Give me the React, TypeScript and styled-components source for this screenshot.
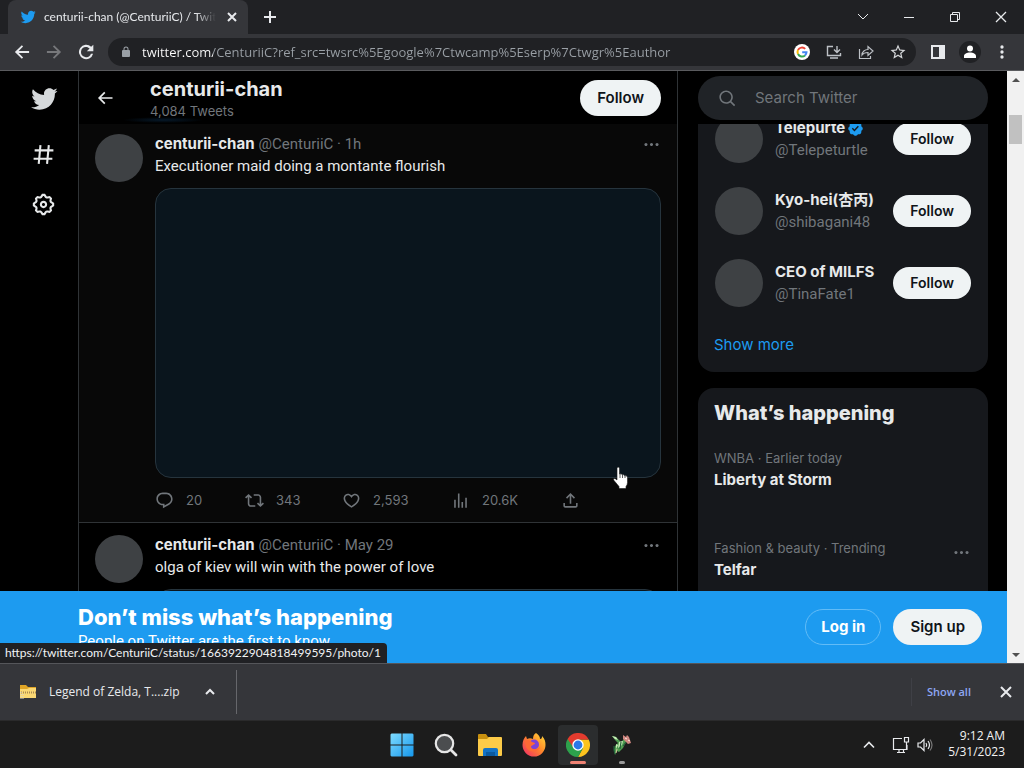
import React from "react";
import styled, { createGlobalStyle } from "styled-components";

const GlobalStyle = createGlobalStyle`
  *, *::before, *::after { box-sizing: border-box; }
  body { margin: 0; background: #000; }
  button, input { font: inherit; color: inherit; }
  button { border: 0; padding: 0; background: none; cursor: pointer; }
  svg { display: block; flex: none; }
  h1, h2, p { margin: 0; }
`;

const systemFont = `"Open Sans", "Noto Sans", sans-serif`;
const compactFont = `Lato, "Open Sans", sans-serif`;
const siteFont = `Inter, Roboto, "Noto Sans CJK JP", sans-serif`;
const copyFont = `Roboto, Inter, sans-serif`;

/* ---------- Browser window ---------- */

const Desktop = styled.div`
  display: flex;
  flex-direction: column;
  height: 100vh;
  overflow: hidden;
  font-family: ${systemFont};
  font-size: 12px;
  line-height: 16px;
  color: #e8eaed;
`;

const TabStrip = styled.header`
  display: flex;
  align-items: center;
  flex: none;
  height: 34px;
  padding-left: 8px;
  background: #202124;
`;

const Tab = styled.div`
  display: flex;
  align-items: center;
  gap: 8px;
  width: 240px;
  height: 34px;
  padding: 0 8px 0 12px;
  border-radius: 8px 8px 0 0;
  background: #35363a;
`;

const TabTitle = styled.span`
  flex: 1;
  min-width: 0;
  overflow: hidden;
  white-space: nowrap;
  font-family: ${compactFont};
  mask-image: linear-gradient(to right, #000 88%, transparent);
`;

const IconButton = styled.button<{ $width?: number; $color?: string }>`
  display: flex;
  align-items: center;
  justify-content: center;
  flex: none;
  width: ${(p) => p.$width ?? 32}px;
  height: 28px;
  color: ${(p) => p.$color ?? "#e8eaed"};
`;

const WindowControls = styled.div`
  display: flex;
  margin-left: auto;
`;

const Toolbar = styled.nav`
  display: flex;
  align-items: center;
  flex: none;
  height: 37px;
  padding: 0 6px;
  border-bottom: 1px solid #5a5b5e;
  background: #35363a;
`;

const Omnibox = styled.label`
  display: flex;
  align-items: center;
  flex: 1;
  min-width: 0;
  height: 28px;
  margin: 0 6px;
  padding: 0 2px 0 12px;
  border-radius: 14px;
  background: #202124;
`;

const UrlInput = styled.input`
  flex: 1;
  min-width: 0;
  height: 24px;
  margin-left: 10px;
  padding: 0;
  border: 0;
  outline: 0;
  font-size: 13px;
  background: linear-gradient(to right, #fff 71px, #9aa0a6 71px);
  background-clip: text;
  -webkit-text-fill-color: transparent;
`;

const Viewport = styled.div`
  position: relative;
  display: flex;
  flex: 1;
  min-height: 0;
  background: #000;
`;

const StatusBubble = styled.div`
  position: absolute;
  left: 0;
  bottom: 0;
  height: 20px;
  padding: 1px 6px 0 5px;
  border-radius: 0 4px 0 0;
  background: #202124;
  color: #f1f3f4;
  font-family: ${compactFont};
  line-height: 18px;
  white-space: nowrap;
`;

const ScrollTrack = styled.div`
  display: flex;
  flex-direction: column;
  align-items: center;
  flex: none;
  width: 17px;
  background: #f1f1f1;
`;

const ScrollArrow = styled.button`
  display: grid;
  place-items: center;
  width: 17px;
  height: 17px;
  color: #505050;
`;

const ScrollThumb = styled.div`
  width: 13px;
  height: 29px;
  margin: 27px 0 auto;
  background: #c1c1c1;
`;

/* ---------- Twitter page ---------- */

const Page = styled.div`
  position: relative;
  display: grid;
  grid-template-columns: 78px minmax(0, 1fr) 290px;
  flex: 1;
  min-width: 0;
  padding-right: 19px;
  overflow: hidden;
  font-family: ${siteFont};
  font-size: 15px;
  line-height: 20px;
  color: #e7e9ea;
`;

const SideNav = styled.nav`
  display: flex;
  flex-direction: column;
  align-items: center;
  padding: 2px 0 0 9px;
`;

const NavLink = styled.a`
  display: grid;
  place-items: center;
  width: 50px;
  height: 50px;
  color: #e7e9ea;

  &:first-child {
    height: 52px;
    margin-bottom: 4px;
    color: #d6d9db;
  }
`;

const Timeline = styled.main`
  min-width: 0;
  margin-right: 20px;
  border: solid #2f3336;
  border-width: 0 1px;
`;

const ProfileBar = styled.div`
  display: flex;
  align-items: center;
  height: 53px;
  padding: 0 16px 0 9px;
  background: radial-gradient(ellipse 40px 3px at 84px 49px, #06192a, transparent) #000;
`;

const BackButton = styled.button`
  display: grid;
  place-items: center;
  width: 34px;
  height: 34px;
  margin-right: 28px;
`;

const ProfileTitle = styled.div`
  flex: 1;
  min-width: 0;
  padding-top: 3px;
`;

const ProfileName = styled.h1`
  font-size: 20px;
  line-height: 24px;
  font-weight: 700;
`;

const ProfileCount = styled.p`
  font-size: 13px;
  line-height: 20px;
  color: #71767b;
`;

const PillButton = styled.button<{ $small?: boolean; $outline?: boolean }>`
  flex: none;
  height: ${(p) => (p.$small ? 32 : 36)}px;
  padding: 0 ${(p) => (p.$outline ? 15 : 16)}px;
  border: 1px solid ${(p) => (p.$outline ? "#62bcf7" : "transparent")};
  border-radius: 18px;
  background: ${(p) => (p.$outline ? "transparent" : "#eff3f4")};
  color: ${(p) => (p.$outline ? "#fff" : "#0f1419")};
  font-size: ${(p) => (p.$small ? 14 : 15)}px;
  font-weight: ${(p) => (p.$outline ? 700 : 600)};
  white-space: nowrap;
`;

const TweetBox = styled.article<{ $hovered?: boolean }>`
  display: flex;
  gap: 12px;
  padding: ${(p) => (p.$hovered ? 10 : 12)}px 16px 12px;
  border-bottom: 1px solid #2f3336;
  background: ${(p) => (p.$hovered ? "#080808" : "#000")};
`;

const Avatar = styled.div`
  flex: none;
  width: 48px;
  height: 48px;
  border-radius: 50%;
  background: #3e4144;
`;

const TweetBody = styled.div`
  flex: 1;
  min-width: 0;
`;

const TweetHead = styled.div`
  display: flex;
  align-items: center;
  gap: 4px;
  height: 20px;
`;

const Strong = styled.strong`
  font-weight: 700;
  white-space: nowrap;
`;

const Muted = styled.span<{ $small?: boolean }>`
  color: #71767b;
  font-family: ${(p) => (p.$small ? siteFont : copyFont)};
  font-size: ${(p) => (p.$small ? 13 : 15)}px;
  white-space: nowrap;
`;

const MoreButton = styled.button`
  height: 28px;
  margin-left: auto;
  color: #71767b;
`;

const Copy = styled.p<{ $spaced?: boolean }>`
  margin-top: ${(p) => (p.$spaced ? 2 : 0)}px;
  font-family: ${copyFont};
`;

const Media = styled.a`
  position: relative;
  display: block;
  height: 290px;
  margin-top: 12px;
  border: 1px solid #26343d;
  border-radius: 16px;
  background: #0a151d;
`;

const Pointer = styled.svg`
  position: absolute;
  right: 30px;
  bottom: -13px;
`;

const Actions = styled.div`
  display: grid;
  grid-template-columns: 90px 97px 109px 110px auto;
  height: 20px;
  margin-top: 12px;
`;

const Action = styled.button`
  display: flex;
  align-items: center;
  gap: 12px;
  color: #71767b;
  font-size: 13px;
`;

const Aside = styled.aside`
  display: flex;
  flex-direction: column;
  min-width: 0;
  padding-top: 5px;
`;

const SearchBox = styled.label`
  display: flex;
  align-items: center;
  flex: none;
  height: 44px;
  margin-bottom: 4px;
  padding: 0 20px;
  gap: 18px;
  border-radius: 22px;
  background: #202327;
  color: #71767b;
`;

const SearchInput = styled.input`
  flex: 1;
  min-width: 0;
  padding: 0;
  border: 0;
  outline: 0;
  background: none;
  &::placeholder { color: #71767b; opacity: 1; }
`;

const CardScroller = styled.div`
  flex: 1;
  min-height: 0;
  overflow: hidden;
`;

const Card = styled.section<{ $scrolled?: boolean }>`
  margin: ${(p) => (p.$scrolled ? -21 : 0)}px 0 16px;
  border-radius: 16px;
  background: #16181c;
`;

const CardTitle = styled.h2`
  padding: 13px 16px 23px;
  font-size: 20px;
  line-height: 24px;
  font-weight: 800;
`;

const Suggestion = styled.div`
  display: flex;
  align-items: center;
  gap: 12px;
  height: 72px;
  padding: 0 17px;
`;

const SuggestionNames = styled.div`
  display: flex;
  flex-direction: column;
  flex: 1;
  gap: 2px;
  min-width: 0;
`;

const NameLine = styled.div`
  display: flex;
  align-items: center;
  gap: 2px;
`;

const ShowMore = styled.a`
  display: block;
  padding: 16px 16px 17px;
  color: #1d9bf0;
  text-decoration: none;
`;

const Trend = styled.div`
  display: flex;
  align-items: flex-start;
  justify-content: space-between;
  height: 90px;
  padding: 0 17px 0 16px;
`;

const TrendText = styled.div`
  display: flex;
  flex-direction: column;
  gap: 2px;
`;

const LoginBanner = styled.footer`
  position: absolute;
  left: 0;
  right: 0;
  bottom: 0;
  display: flex;
  align-items: center;
  gap: 12px;
  height: 72px;
  padding: 0 25px 0 78px;
  background: #1d9bf0;
  color: #fff;
`;

const BannerText = styled.div`
  flex: 1;
  min-width: 0;
`;

const BannerTitle = styled.h2`
  font-size: 22px;
  line-height: 28px;
  font-weight: 800;
`;

/* ---------- Downloads and task bar ---------- */

const DownloadBar = styled.section`
  display: flex;
  align-items: center;
  flex: none;
  height: 57px;
  padding: 0 2px 0 20px;
  border-top: 1px solid #55565a;
  background: #35363a;
`;

const DownloadItem = styled.button`
  display: flex;
  align-items: center;
  gap: 13px;
  margin-right: 4px;
  white-space: nowrap;
`;

const Divider = styled.span<{ $faint?: boolean }>`
  width: 1px;
  height: ${(p) => (p.$faint ? 28 : 44)}px;
  background: ${(p) => (p.$faint ? "#3f4046" : "#66676b")};
`;

const ShowAll = styled.button`
  margin: 0 19px 0 15px;
  color: #8ea6f2;
  font-weight: 600;
  font-size: 11px;
`;

const Downloads = styled.div`
  display: flex;
  align-items: center;
  margin-right: auto;
`;

const TaskBar = styled.footer`
  display: grid;
  grid-template-columns: 1fr auto 1fr;
  flex: none;
  height: 48px;
  border-top: 1px solid #2a2a2b;
  background: #1c1c1c;
`;

const Apps = styled.div`
  grid-column: 2;
  display: flex;
  align-items: center;
  gap: 4px;
`;

const AppButton = styled.button<{ $active?: boolean; $mark?: string }>`
  position: relative;
  display: grid;
  place-items: center;
  width: 40px;
  height: 40px;
  border-radius: 4px;
  background: ${(p) => (p.$active ? "#2b2d2e" : "transparent")};

  &::after {
    content: "";
    position: absolute;
    left: 50%;
    bottom: 1px;
    width: ${(p) => (p.$active ? 16 : 6)}px;
    height: 3px;
    border-radius: 2px;
    background: ${(p) => p.$mark ?? "transparent"};
    transform: translateX(-50%);
  }
`;

const Tray = styled.div`
  display: flex;
  align-items: center;
  justify-content: flex-end;
  padding-right: 19px;
  color: #f3f3f3;
`;

const Clock = styled.time`
  margin-left: 15px;
  padding-bottom: 1px;
  text-align: right;
`;

/* ---------- Icons ---------- */

const paths = {
  bird: "M23.643 4.937c-.835.37-1.732.62-2.675.733.962-.576 1.7-1.49 2.048-2.578-.9.534-1.897.922-2.958 1.13-.85-.904-2.06-1.47-3.4-1.47-2.572 0-4.658 2.086-4.658 4.66 0 .364.042.718.12 1.06-3.873-.195-7.304-2.05-9.602-4.868-.4.69-.63 1.49-.63 2.342 0 1.616.823 3.043 2.072 3.878-.764-.025-1.482-.234-2.11-.583v.06c0 2.257 1.605 4.14 3.737 4.568-.392.106-.803.162-1.227.162-.3 0-.593-.028-.877-.082.593 1.85 2.313 3.198 4.352 3.234-1.595 1.25-3.604 1.995-5.786 1.995-.376 0-.747-.022-1.112-.065 2.062 1.323 4.51 2.093 7.14 2.093 8.57 0 13.255-7.098 13.255-13.254 0-.2-.005-.402-.014-.602.91-.658 1.7-1.477 2.323-2.41z",
  hash: "M10.09 3.098L9.72 7h5.99l.39-4.089 1.99.187L17.72 7h3.78v2h-3.97l-.56 6h3.53v2h-3.72l-.38 4.089-1.99-.187.36-3.902H8.78l-.38 4.089-1.99-.187L6.77 17H2.5v-2h4.46l.56-6H3.5V7h4.21l.39-4.089 1.99.187zM14.96 15l.56-6H9.53l-.56 6h5.99z",
  settings: "M10.54 1.75h2.92l1.57 2.36c.11.17.32.25.53.21l2.53-.59 2.17 2.17-.58 2.54c-.05.2.04.41.21.53l2.36 1.57v2.92l-2.36 1.57c-.17.12-.26.33-.21.53l.58 2.54-2.17 2.17-2.53-.59c-.21-.04-.42.04-.53.21l-1.57 2.36h-2.92l-1.58-2.36c-.11-.17-.32-.25-.52-.21l-2.54.59-2.17-2.17.58-2.54c.05-.2-.03-.41-.21-.53l-2.35-1.57v-2.92L4.1 8.97c.18-.12.26-.33.21-.53L3.73 5.9 5.9 3.73l2.54.59c.2.04.41-.04.52-.21l1.58-2.36zm1.07 2l-.98 1.47C10.05 6.08 9 6.5 7.99 6.27l-1.46-.34-.6.6.33 1.46c.24 1.01-.18 2.07-1.05 2.64l-1.46.98v.78l1.46.98c.87.57 1.29 1.63 1.05 2.64l-.33 1.46.6.6 1.46-.34c1.01-.23 2.06.19 2.64 1.05l.98 1.47h.78l.97-1.47c.58-.86 1.63-1.28 2.65-1.05l1.45.34.61-.6-.34-1.46c-.23-1.01.18-2.07 1.05-2.64l1.47-.98v-.78l-1.47-.98c-.87-.57-1.28-1.63-1.05-2.64l.34-1.46-.61-.6-1.45.34c-1.02.23-2.07-.19-2.65-1.05l-.97-1.47h-.78zM12 10.5c-.83 0-1.5.67-1.5 1.5s.67 1.5 1.5 1.5c.82 0 1.5-.67 1.5-1.5s-.68-1.5-1.5-1.5zM8.5 12c0-1.93 1.56-3.5 3.5-3.5 1.93 0 3.5 1.57 3.5 3.5s-1.57 3.5-3.5 3.5c-1.94 0-3.5-1.57-3.5-3.5z",
  back: "M7.414 13l5.043 5.04-1.414 1.42L3.586 12l7.457-7.46 1.414 1.42L7.414 11H21v2H7.414z",
  reply: "M1.751 10c0-4.42 3.584-8 8.005-8h4.366c4.49 0 8.129 3.64 8.129 8.13 0 2.96-1.607 5.68-4.196 7.11l-8.054 4.46v-3.69h-.067c-4.49.1-8.183-3.51-8.183-8.01zm8.005-6c-3.317 0-6.005 2.69-6.005 6 0 3.37 2.77 6.08 6.138 6.01l.351-.01h1.761v2.3l5.087-2.81c1.951-1.08 3.163-3.13 3.163-5.36 0-3.39-2.744-6.13-6.129-6.13H9.756z",
  retweet: "M4.5 3.88l4.432 4.14-1.364 1.46L5.5 7.55V16c0 1.1.896 2 2 2H13v2H7.5c-2.209 0-4-1.79-4-4V7.55L1.432 9.48.068 8.02 4.5 3.88zM16.5 6H11V4h5.5c2.209 0 4 1.79 4 4v8.45l2.068-1.93 1.364 1.46-4.432 4.14-4.432-4.14 1.364-1.46 2.068 1.93V8c0-1.1-.896-2-2-2z",
  like: "M16.697 5.5c-1.222-.06-2.679.51-3.89 2.16l-.805 1.09-.806-1.09C9.984 6.01 8.526 5.44 7.304 5.5c-1.243.07-2.349.78-2.91 1.91-.552 1.12-.633 2.78.479 4.82 1.074 1.97 3.257 4.27 7.129 6.61 3.87-2.34 6.052-4.64 7.126-6.61 1.111-2.04 1.03-3.7.477-4.82-.561-1.13-1.666-1.84-2.908-1.91zm4.187 7.69c-1.351 2.48-4.001 5.12-8.379 7.67l-.503.3-.504-.3c-4.379-2.55-7.029-5.19-8.382-7.67-1.36-2.5-1.41-4.86-.514-6.67.887-1.79 2.647-2.91 4.601-3.01 1.651-.09 3.368.56 4.798 2.01 1.429-1.45 3.146-2.1 4.796-2.01 1.954.1 3.714 1.22 4.601 3.01.896 1.81.846 4.17-.514 6.67z",
  views: "M8.75 21V3h2v18h-2zM18 21V8.5h2V21h-2zM4 21l.004-10h2L6 21H4zm9.248 0v-7h2v7h-2z",
  share: "M12 2.59l5.7 5.7-1.41 1.42L13 6.41V16h-2V6.41l-3.3 3.3-1.41-1.42L12 2.59zM21 15l-.02 3.51c0 1.38-1.12 2.49-2.5 2.49H5.5C4.11 21 3 19.88 3 18.5V15h2v3.5c0 .28.22.5.5.5h12.98c.28 0 .5-.22.5-.5L19 15h2z",
  more: "M3 12c0-1.1.9-2 2-2s2 .9 2 2-.9 2-2 2-2-.9-2-2zm9 2c1.1 0 2-.9 2-2s-.9-2-2-2-2 .9-2 2 .9 2 2 2zm7 0c1.1 0 2-.9 2-2s-.9-2-2-2-2 .9-2 2 .9 2 2 2z",
  search: "M10.25 3.75c-3.59 0-6.5 2.91-6.5 6.5s2.91 6.5 6.5 6.5c1.795 0 3.419-.726 4.596-1.904 1.178-1.177 1.904-2.801 1.904-4.596 0-3.59-2.91-6.5-6.5-6.5zm-8.5 6.5c0-4.694 3.806-8.5 8.5-8.5s8.5 3.806 8.5 8.5c0 1.986-.682 3.815-1.824 5.262l4.781 4.781-1.414 1.414-4.781-4.781c-1.447 1.142-3.276 1.824-5.262 1.824-4.694 0-8.5-3.806-8.5-8.5z",
  verified: "M22.25 12c0-1.43-.88-2.67-2.19-3.34.46-1.39.2-2.9-.81-3.91s-2.52-1.27-3.91-.81c-.66-1.31-1.91-2.19-3.34-2.19s-2.67.88-3.33 2.19c-1.4-.46-2.91-.2-3.92.81s-1.26 2.52-.8 3.91c-1.31.67-2.2 1.91-2.2 3.34s.89 2.67 2.2 3.34c-.46 1.39-.21 2.9.8 3.91s2.52 1.26 3.91.81c.67 1.31 1.91 2.19 3.34 2.19s2.68-.88 3.34-2.19c1.39.45 2.9.2 3.91-.81s1.27-2.52.81-3.91c1.31-.67 2.19-1.91 2.19-3.34zm-11.71 4.2L6.8 12.46l1.41-1.42 2.26 2.26 4.8-5.23 1.47 1.36-6.2 6.77z",
  arrowBack: "M20.500 10.700H8l5.300-5.300L11.800 3.800 3.500 12l8.300 8.200 1.500-1.600L8 13.300h12.500z",
  arrowForward: "M3.500 10.700H16l-5.300-5.300 1.500-1.600 8.300 8.200-8.300 8.200-1.500-1.600 5.300-5.300H3.500z",
  reload: "M18.200 5.800A8.600 8.600 0 1 0 20.500 14h-2.600A6.100 6.100 0 1 1 12 5.900c1.700 0 3.200.7 4.300 1.800L13 11h7.800V3.200z",
  lock: "M18 8h-1V6A5 5 0 0 0 7 6v2H6a2 2 0 0 0-2 2v10c0 1.1.9 2 2 2h12a2 2 0 0 0 2-2V10a2 2 0 0 0-2-2zM9 6a3 3 0 0 1 6 0v2H9z",
  star: "M22 9.24l-7.19-.62L12 2 9.19 8.63 2 9.24l5.46 4.73L5.82 21 12 17.27 18.18 21l-1.63-7.03zM12 15.4l-3.76 2.27 1-4.28-3.32-2.88 4.38-.38L12 6.1l1.71 4.04 4.38.38-3.32 2.88 1 4.28z",
  kebab: "M12 8a2 2 0 1 0 0-4 2 2 0 0 0 0 4zm0 2a2 2 0 1 0 0 4 2 2 0 0 0 0-4zm0 6a2 2 0 1 0 0 4 2 2 0 0 0 0-4z",
};

type IconProps = { name: keyof typeof paths; size: number; color?: string };

const Icon = ({ name, size, color = "currentColor" }: IconProps) => (
  <svg width={size} height={size} viewBox="0 0 24 24" fill={color} aria-hidden="true">
    <path d={paths[name]} />
  </svg>
);

type LineProps = { d: string; size?: number; stroke?: number };

const LineIcon = ({ d, size = 16, stroke = 1 }: LineProps) => (
  <svg width={size} height={size} viewBox="0 0 16 16" fill="none" stroke="currentColor" strokeWidth={stroke} aria-hidden="true">
    <path d={d} />
  </svg>
);

const GoogleIcon = () => (
  <svg width="16" height="16" viewBox="0 0 16 16" aria-hidden="true">
    <circle cx="8" cy="8" r="8" fill="#fff" />
    <g fill="none" strokeWidth="2">
      <path d="M11.2 4.900A4.500 4.500 0 0 0 4 6" stroke="#ea4335" />
      <path d="M4 6a4.500 4.500 0 0 0 0 4" stroke="#fbbc05" />
      <path d="M4 10a4.500 4.500 0 0 0 7 1.400" stroke="#34a853" />
      <path d="M11 11.400A4.400 4.400 0 0 0 12.500 8.200H8.200" stroke="#4285f4" />
    </g>
  </svg>
);

const ZipFolderIcon = () => (
  <svg width="16" height="16" viewBox="0 0 16 16" aria-hidden="true">
    <path d="M0 1h6l2 2h8v11H0z" fill="#e0a526" />
    <path d="M0 5h7l2-1h7v10H0z" fill="#fbd873" />
    <path d="M1 8.500h15" stroke="#a98a52" strokeWidth="2" strokeDasharray="1 1" />
    <path d="M1 8v7M3 10v5" stroke="#d5d5d5" strokeDasharray="1 1" />
  </svg>
);

const WindowsIcon = () => (
  <svg width="24" height="24" viewBox="0 0 24 24" aria-hidden="true">
    <defs>
      <linearGradient id="win" x1="0" y1="0" x2="1" y2="1">
        <stop offset="0" stopColor="#7fdcff" />
        <stop offset="1" stopColor="#1597ec" />
      </linearGradient>
    </defs>
    <path d="M1.500 .5H11.500V11.500H.5V1.500zM12.500 .5H22.500L23.500 1.500V11.500H12.500zM.5 12.500H11.500V23.500H1.500L.5 22.500zM12.500 12.500H23.500V22.500L22.500 23.500H12.500z" fill="url(#win)" />
  </svg>
);

const TaskSearchIcon = () => (
  <svg width="24" height="24" viewBox="0 0 24 24" aria-hidden="true">
    <circle cx="10.500" cy="10.500" r="8.700" fill="#4b4d4f" stroke="#e6e6e6" strokeWidth="2.200" />
    <path d="M17 17l5 5" stroke="#e6e6e6" strokeWidth="2.800" strokeLinecap="round" />
  </svg>
);

const ExplorerIcon = () => (
  <svg width="26" height="24" viewBox="0 0 26 24" aria-hidden="true">
    <path d="M1 2q0-1 1-1h7l2 3h13v6H1z" fill="#c8900f" />
    <path d="M1 6h9l2-2h12q1 0 1 1v17q0 1-1 1H2q-1 0-1-1z" fill="#fccb48" />
    <path d="M6 17q0-2 2-2h11q2 0 2 2v6H6z" fill="#1473c5" />
    <path d="M9 19h9v4H9z" fill="#0c5a9f" />
  </svg>
);

const FirefoxIcon = () => (
  <svg width="24" height="24" viewBox="0 0 24 24" aria-hidden="true">
    <defs>
      <linearGradient id="fox" x1="1" y1="0" x2="0" y2="1">
        <stop offset="0" stopColor="#ffe13c" />
        <stop offset=".45" stopColor="#ff8a2a" />
        <stop offset="1" stopColor="#f0246b" />
      </linearGradient>
    </defs>
    <path d="M14 0c3 2 4 4 4 6 2 0 2-2 2-3 3 3 3.500 6 3.500 9a11.500 11.500 0 0 1-23 0C.5 8 2 5 4 3l1 3c2-1 4-1 6 0 0-3 1-5 3-6z" fill="url(#fox)" />
    <circle cx="12" cy="11.500" r="5" fill="#7b42d8" />
    <path d="M3 8c3-2 5-1 7 1l3 1c0 2-4 2-4 4 1 3 6 3 9 0-1 5-11 7-14 0z" fill="#ff6a35" />
  </svg>
);

const ChromeIcon = () => (
  <svg width="24" height="24" viewBox="0 0 24 24" aria-hidden="true">
    <path d="M12 6.500h10.700A12 12 0 0 1 12 24l5-9z" fill="#fcc31e" />
    <path d="M1.600 6A12 12 0 0 0 12 24l5-9-5-3z" fill="#2da14c" />
    <path d="M1.600 6A12 12 0 0 1 22.700 6.500H12L7 14z" fill="#e33b2e" />
    <circle cx="12" cy="12" r="5.700" fill="#fff" />
    <circle cx="12" cy="12" r="4.400" fill="#2b78e8" />
  </svg>
);

const SpriteIcon = () => (
  <svg width="22" height="22" viewBox="0 0 22 22" aria-hidden="true">
    <path d="M1 2l4 1 3 3 2 2 3-3 3 2-2 3-2 4-4 4-2-1-2 4-1-5 1-4 3-3-3-3z" fill="#4f9c50" />
    <path d="M1 2l4 1 2 3-3-1zM8 8l4-1-1 4-4 3zM5 10l2 1-2 4z" fill="#c9ecb8" />
    <path d="M12 1l3 2 1-2 2 2 1 3 1 3-3 1-3-3-2-2z" fill="#cf8680" />
    <path d="M14 4l2 1M17 6l2 1" stroke="#f8e4dc" />
    <path d="M3 12v4l1 4M10 8l-1 7M15 8l-3 4" stroke="#24603a" strokeWidth="1.200" fill="none" />
    <path d="M6 15l-1 4" stroke="#d8c9a0" />
  </svg>
);

const HandPointer = () => (
  <Pointer width="18" height="24" viewBox="0 0 18 24" aria-hidden="true">
    <path d="M5 2.500q0-1.500 1.200-1.500T7.500 2.500V8q2-.8 2.500.7 2-.5 2.500 1 2.700-.6 3 1.800v5q0 2-1.500 4v2H7v-2L2 14.500q-1-1.500 0-2t3 1.500z" fill="#fff" stroke="#1a1a1a" strokeWidth=".6" />
    <path d="M8 8v4M10.500 9v3M13 10v2" stroke="#333" strokeWidth=".8" />
  </Pointer>
);

/* ---------- Content ---------- */

const suggestions = [
  { name: "Telepurte", handle: "@Telepeturtle", verified: true },
  { name: "Kyo-hei(杏丙)", handle: "@shibagani48" },
  { name: "CEO of MILFS", handle: "@TinaFate1" },
];

type TweetProps = { date: string; text: string; hovered?: boolean; children?: React.ReactNode };

const Tweet = ({ date, text, hovered, children }: TweetProps) => (
  <TweetBox $hovered={hovered}>
    <Avatar />
    <TweetBody>
      <TweetHead>
        <Strong>centurii-chan</Strong>
        <Muted>@CenturiiC · {date}</Muted>
        <MoreButton aria-label="More"><Icon name="more" size={19} /></MoreButton>
      </TweetHead>
      <Copy $spaced>{text}</Copy>
      <Media href="#photo" aria-label="Image">{hovered && <HandPointer />}</Media>
      {children}
    </TweetBody>
  </TweetBox>
);

const BrowserTop = () => (
  <>
    <TabStrip>
      <Tab>
        <Icon name="bird" size={16} color="#1d9bf0" />
        <TabTitle>centurii-chan (@CenturiiC) / Twitter</TabTitle>
        <IconButton $width={16} aria-label="Close tab"><LineIcon d="M4 4l8 8M12 4l-8 8" stroke={2} /></IconButton>
      </Tab>
      <IconButton $width={44} aria-label="New tab"><LineIcon d="M8 2v12M2 8h12" stroke={2} /></IconButton>
      <WindowControls>
        <IconButton $width={46} aria-label="Search tabs"><LineIcon d="M3 5l5 5 5-5" /></IconButton>
        <IconButton $width={46} aria-label="Minimize"><LineIcon d="M3 8.500h10" /></IconButton>
        <IconButton $width={46} aria-label="Restore"><LineIcon d="M3.500 5.500h7v7h-7zM5.500 5V3.500h7v7H11" /></IconButton>
        <IconButton $width={46} aria-label="Close"><LineIcon d="M3 3l10 10M13 3L3 13" stroke={1.3} /></IconButton>
      </WindowControls>
    </TabStrip>
    <Toolbar>
      <IconButton aria-label="Back"><Icon name="arrowBack" size={20} /></IconButton>
      <IconButton aria-label="Forward" $color="#77787b"><Icon name="arrowForward" size={20} /></IconButton>
      <IconButton aria-label="Reload"><Icon name="reload" size={20} /></IconButton>
      <Omnibox>
        <Icon name="lock" size={12} color="#9aa0a6" />
        <UrlInput
          aria-label="Address"
          defaultValue="twitter.com/CenturiiC?ref_src=twsrc%5Egoogle%7Ctwcamp%5Eserp%7Ctwgr%5Eauthor"
        />
        <IconButton aria-label="Search with Google"><GoogleIcon /></IconButton>
        <IconButton aria-label="Install" $color="#bdc1c6"><LineIcon d="M7 2.500H1.500v9h13V9M4 14h8M11 2v6M8 5.500l3 3 3-3" stroke={1.4} /></IconButton>
        <IconButton aria-label="Share" $color="#bdc1c6"><LineIcon d="M1.500 5v9.500h11V12M4 11c0-3.500 3-5.500 6-5.500V2.500l5 4.500-5 4.500V8.500C7 8.500 5 9.500 4 11z" stroke={1.2} /></IconButton>
        <IconButton aria-label="Bookmark" $color="#d5d7da"><Icon name="star" size={18} /></IconButton>
      </Omnibox>
      <IconButton aria-label="Side panel">
        <svg width="14" height="14" viewBox="0 0 14 14" aria-hidden="true">
          <path d="M0 0h14v14H0zM2 2v10h6V2z" fill="currentColor" fillRule="evenodd" />
        </svg>
      </IconButton>
      <IconButton aria-label="Profile">
        <svg width="22" height="22" viewBox="0 0 22 22" aria-hidden="true">
          <circle cx="11" cy="11" r="11" fill="#202124" />
          <path d="M11 10.500a3 3 0 1 0 0-6 3 3 0 0 0 0 6zM5 17v-2c0-2 3-3.500 6-3.500s6 1.500 6 3.500v2z" fill="#fff" />
        </svg>
      </IconButton>
      <IconButton aria-label="Menu"><Icon name="kebab" size={20} /></IconButton>
    </Toolbar>
  </>
);

const Sidebar = () => (
  <Aside>
    <SearchBox>
      <Icon name="search" size={19} />
      <SearchInput type="search" placeholder="Search Twitter" aria-label="Search Twitter" />
    </SearchBox>
    <CardScroller>
      <Card $scrolled>
        {suggestions.map((s) => (
          <Suggestion key={s.handle}>
            <Avatar />
            <SuggestionNames>
              <NameLine>
                <Strong>{s.name}</Strong>
                {s.verified && <Icon name="verified" size={17} color="#1d9bf0" />}
              </NameLine>
              <Muted>{s.handle}</Muted>
            </SuggestionNames>
            <PillButton $small>Follow</PillButton>
          </Suggestion>
        ))}
        <ShowMore href="#more">Show more</ShowMore>
      </Card>
      <Card>
        <CardTitle>What’s happening</CardTitle>
        <Trend>
          <TrendText>
            <Muted $small>WNBA · Earlier today</Muted>
            <Strong>Liberty at Storm</Strong>
          </TrendText>
        </Trend>
        <Trend>
          <TrendText>
            <Muted $small>Fashion &amp; beauty · Trending</Muted>
            <Strong>Telfar</Strong>
          </TrendText>
          <MoreButton aria-label="More"><Icon name="more" size={19} /></MoreButton>
        </Trend>
      </Card>
    </CardScroller>
  </Aside>
);

export default function App() {
  return (
    <Desktop>
      <GlobalStyle />
      <BrowserTop />
      <Viewport>
        <Page>
          <SideNav>
            <NavLink href="#home" aria-label="Twitter"><Icon name="bird" size={28} /></NavLink>
            <NavLink href="#explore" aria-label="Explore"><Icon name="hash" size={25} /></NavLink>
            <NavLink href="#settings" aria-label="Settings"><Icon name="settings" size={25} /></NavLink>
          </SideNav>
          <Timeline>
            <ProfileBar>
              <BackButton aria-label="Back"><Icon name="back" size={20} /></BackButton>
              <ProfileTitle>
                <ProfileName>centurii-chan</ProfileName>
                <ProfileCount>4,084 Tweets</ProfileCount>
              </ProfileTitle>
              <PillButton>Follow</PillButton>
            </ProfileBar>
            <Tweet hovered date="1h" text="Executioner maid doing a montante flourish">
              <Actions>
                <Action aria-label="Reply"><Icon name="reply" size={19} />20</Action>
                <Action aria-label="Retweet"><Icon name="retweet" size={19} />343</Action>
                <Action aria-label="Like"><Icon name="like" size={19} />2,593</Action>
                <Action aria-label="Views"><Icon name="views" size={19} />20.6K</Action>
                <Action aria-label="Share"><Icon name="share" size={19} /></Action>
              </Actions>
            </Tweet>
            <Tweet date="May 29" text="olga of kiev will win with the power of love" />
          </Timeline>
          <Sidebar />
          <LoginBanner>
            <BannerText>
              <BannerTitle>Don’t miss what’s happening</BannerTitle>
              <Copy>People on Twitter are the first to know.</Copy>
            </BannerText>
            <PillButton $outline>Log in</PillButton>
            <PillButton>Sign up</PillButton>
          </LoginBanner>
        </Page>
        <ScrollTrack>
          <ScrollArrow aria-label="Scroll up">
            <svg width="8" height="4" viewBox="0 0 8 4"><path d="M0 4l4-4 4 4z" fill="currentColor" /></svg>
          </ScrollArrow>
          <ScrollThumb />
          <ScrollArrow aria-label="Scroll down">
            <svg width="8" height="4" viewBox="0 0 8 4"><path d="M0 0l4 4 4-4z" fill="currentColor" /></svg>
          </ScrollArrow>
        </ScrollTrack>
        <StatusBubble>https://twitter.com/CenturiiC/status/1663922904818499595/photo/1</StatusBubble>
      </Viewport>
      <DownloadBar>
        <Downloads>
          <DownloadItem><ZipFolderIcon />Legend of Zelda, T....zip</DownloadItem>
          <IconButton $width={52} aria-label="Download options"><LineIcon d="M4 10l4-4 4 4" stroke={2} /></IconButton>
          <Divider />
        </Downloads>
        <Divider $faint />
        <ShowAll>Show all</ShowAll>
        <IconButton aria-label="Close downloads"><LineIcon d="M3 3l10 10M13 3L3 13" stroke={2} /></IconButton>
      </DownloadBar>
      <TaskBar>
        <Apps>
          <AppButton aria-label="Start"><WindowsIcon /></AppButton>
          <AppButton aria-label="Search"><TaskSearchIcon /></AppButton>
          <AppButton aria-label="File Explorer"><ExplorerIcon /></AppButton>
          <AppButton aria-label="Firefox"><FirefoxIcon /></AppButton>
          <AppButton aria-label="Chrome" $active $mark="#ef8273"><ChromeIcon /></AppButton>
          <AppButton aria-label="Game" $mark="#9a9a9a"><SpriteIcon /></AppButton>
        </Apps>
        <Tray>
          <IconButton aria-label="Hidden icons"><LineIcon d="M3 10.500l5-5 5 5" stroke={1.6} /></IconButton>
          <IconButton aria-label="Network">
            <svg width="18" height="18" viewBox="0 0 18 18" fill="none" stroke="currentColor" strokeWidth="1.200" aria-hidden="true">
              <path d="M10 2.500H1.500v11H15V9M5 16.500h8M7 14v2M11.500 14v2M12.500 1.500h4V6h-4zM14.500 6v8" />
            </svg>
          </IconButton>
          <IconButton $width={16} aria-label="Volume">
            <svg width="16" height="16" viewBox="0 0 16 16" fill="none" stroke="currentColor" strokeWidth="1.200" aria-hidden="true">
              <path d="M1 6h2.500L7 2.500v11L3.500 10H1zM9 6q1.500 2 0 4M11 4q3 4 0 8" />
              <path d="M13 2.500q4 5.500 0 11" stroke="#777" />
            </svg>
          </IconButton>
          <Clock>9:12 AM<br />5/31/2023</Clock>
        </Tray>
      </TaskBar>
    </Desktop>
  );
}
